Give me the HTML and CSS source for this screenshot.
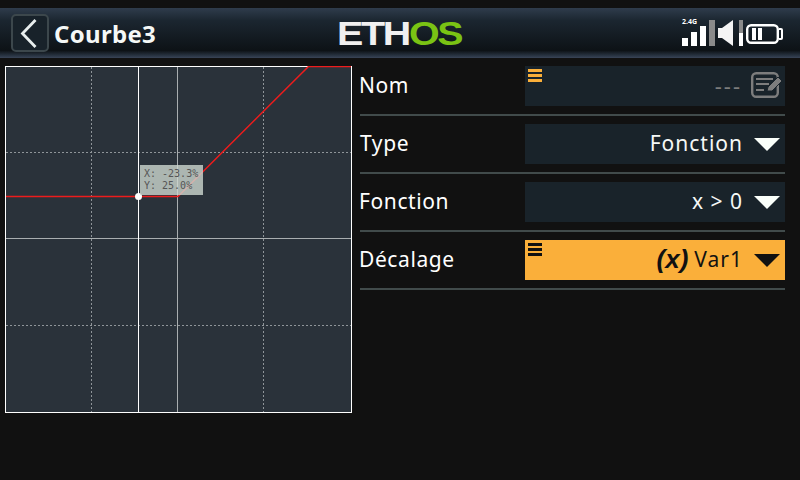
FILE: index.html
```html
<!DOCTYPE html>
<html lang="fr">
<head>
    <meta charset="UTF-8">
    <title>Courbe3</title>
    <link rel="stylesheet" href="styles.css">
</head>
<body>
    <div class="topbar">
        <div class="top-left">
            <button class="back">
                <svg width="24" height="30" viewBox="0 0 24 30"><path d="M17.5 2 L4.5 15.5 L17.5 29" fill="none" stroke="#e8eeee" stroke-width="2.8"/></svg>
            </button>
            <span class="title">Courbe3</span>
        </div>
        <div class="logo"><span class="logo-white">ETH</span><span class="logo-green">OS</span></div>
        <div class="status">
            <div class="signal">
                <span class="signal-label">2.4G</span>
                <svg width="34" height="26" viewBox="0 0 34 26">
                    <rect x="0" y="18" width="6" height="8" fill="#fff"/>
                    <rect x="9" y="12" width="6" height="14" fill="#fff"/>
                    <rect x="18" y="6" width="6" height="20" fill="#fff"/>
                    <rect x="27" y="0" width="6" height="26" fill="#8a8a8a"/>
                </svg>
            </div>
            <svg width="25" height="26" viewBox="0 0 25 26">
                <path d="M0 8 H4 L15 0 V26 L4 18 H0 Z" fill="#f4f4f4"/>
                <rect x="21" y="0" width="4" height="13" fill="#8a8a8a"/>
                <rect x="21" y="13" width="4" height="13" fill="#fff"/>
            </svg>
            <svg class="battery" width="37" height="20" viewBox="0 0 37 20">
                <rect x="1.2" y="1.2" width="30.6" height="17.6" rx="4" fill="none" stroke="#fff" stroke-width="2.4"/>
                <path d="M33 5 H35 Q36 5 36 6 V14 Q36 15 35 15 H33" fill="none" stroke="#fff" stroke-width="2"/>
                <rect x="6" y="4" width="4" height="12" fill="#fff"/>
                <rect x="12" y="4" width="4" height="12" fill="#fff"/>
            </svg>
        </div>
    </div>

    <div class="main">
        <div class="graph">
            <svg width="347" height="347" viewBox="0 0 347 347">
                <rect x="0.5" y="0.5" width="346" height="346" fill="none" stroke="#fff" stroke-width="1"/>
                <g stroke="#8f9599" stroke-width="1" stroke-dasharray="2 2">
                    <path d="M86.5 1 V346"/>
                    <path d="M258.5 1 V346"/>
                    <path d="M1 86.5 H346"/>
                    <path d="M1 259.5 H346"/>
                </g>
                <g stroke="#a9aeb0" stroke-width="1">
                    <path d="M172.5 1 V346"/>
                    <path d="M1 172.5 H346"/>
                </g>
                <path d="M133.5 1 V346" stroke="#fff" stroke-width="1"/>
                <path d="M1 130.5 H173 L303.5 0.5 H346" fill="none" stroke="#ee1c1c" stroke-width="1.5"/>
                <circle cx="133.5" cy="130.5" r="3.5" fill="#fff"/>
            </svg>
            <div class="tooltip">
                <div>X: -23.3%</div>
                <div>Y: 25.0%</div>
            </div>
        </div>

        <div class="form">
            <div class="row">
                <span class="label">Nom</span>
                <div class="field field-name">
                    <div class="grip"><i></i><i></i><i></i></div>
                    <span class="muted">---</span>
                    <svg width="32" height="26" viewBox="0 0 32 26">
                        <rect x="1.2" y="1.2" width="25.6" height="23.6" rx="4" fill="none" stroke="#7d7d7d" stroke-width="2.4"/>
                        <path d="M5 7 H22 M5 12 H18 M5 18 H13" stroke="#7d7d7d" stroke-width="2.2"/>
                        <path d="M16 19 L17 15 L27 5 L31 9 L21 19 Z" fill="#7d7d7d" stroke="#19232a" stroke-width="1"/>
                    </svg>
                </div>
            </div>
            <div class="row">
                <span class="label label-type">Type</span>
                <div class="field">
                    <span>Fonction</span>
                    <span class="arrow"></span>
                </div>
            </div>
            <div class="row">
                <span class="label">Fonction</span>
                <div class="field">
                    <span>x &gt; 0</span>
                    <span class="arrow"></span>
                </div>
            </div>
            <div class="row">
                <span class="label">Décalage</span>
                <div class="field field-active">
                    <div class="grip"><i></i><i></i><i></i></div>
                    <span class="var-icon">(x)</span>
                    <span>Var1</span>
                    <span class="arrow"></span>
                </div>
            </div>
        </div>
    </div>
</body>
</html>
```

FILE: styles.css
```css
body {
    margin: 0;
    width: 800px;
    height: 480px;
    overflow: hidden;
    background-color: #111111;
    color: #fff;
    font-family: 'Noto Sans', sans-serif;
}
.topbar {
    margin-top: 8px;
    height: 50px;
    box-sizing: border-box;
    display: flex;
    align-items: center;
    justify-content: space-between;
    padding: 0 16px 0 11px;
    background: linear-gradient(#2f3c4c 0%, #1b2630 25%, #0d1216 85%, #2b3645 96%, #3a4557 100%);
}
.top-left {
    display: flex;
    align-items: center;
    gap: 5px;
}
.back {
    width: 38px;
    height: 38px;
    box-sizing: border-box;
    padding: 0;
    display: flex;
    align-items: center;
    justify-content: center;
    background-color: #18222a;
    border: 2px solid #3c474c;
    border-radius: 5px;
}
.title {
    font-size: 24px;
    font-weight: 700;
    letter-spacing: 0.3px;
    color: #f5f8f6;
}
.logo {
    position: absolute;
    left: 337px;
    top: 12px;
    font-family: 'Liberation Sans', sans-serif;
    font-size: 34px;
    line-height: 42px;
    font-weight: 700;
    letter-spacing: -2px;
    transform: scaleX(1.16);
    transform-origin: left center;
}
.logo-white {
    color: #f0f0f0;
}
.logo-green {
    color: #7ac314;
}
.status {
    display: flex;
    align-items: flex-end;
    gap: 3px;
    height: 26px;
    margin-right: 1px;
}
.battery {
    margin-bottom: 2px;
}
.signal {
    position: relative;
    width: 33px;
    height: 26px;
}
.signal svg {
    display: block;
}
.signal-label {
    position: absolute;
    left: 0;
    top: -3px;
    font-size: 7px;
    line-height: 9px;
    font-weight: 700;
}
.main {
    display: flex;
    margin-top: 8px;
    padding-left: 5px;
}
.graph {
    position: relative;
    width: 347px;
    height: 347px;
    background-color: #2a323a;
}
.graph svg {
    display: block;
}
.tooltip {
    position: absolute;
    left: 135px;
    top: 99px;
    width: 63px;
    height: 30px;
    box-sizing: border-box;
    padding: 3px 0 0 4px;
    background-color: rgba(205, 215, 208, 0.8);
    color: #555;
    font-family: 'DejaVu Sans Mono', monospace;
    font-size: 10px;
    line-height: 12px;
}
.form {
    width: 425px;
    margin-left: 8px;
}
.row {
    height: 50px;
    box-sizing: border-box;
    margin-bottom: 8px;
    display: flex;
    justify-content: space-between;
    border-bottom: 2px solid #414b4b;
}
.label {
    height: 38px;
    margin-left: -1px;
    display: flex;
    align-items: center;
    font-size: 21px;
    letter-spacing: 0.6px;
}
.label-type {
    margin-left: 0;
}
.field {
    position: relative;
    width: 260px;
    height: 40px;
    box-sizing: border-box;
    display: flex;
    align-items: center;
    justify-content: flex-end;
    padding-right: 5px;
    padding-bottom: 2px;
    background-color: #19232a;
    font-size: 21px;
    letter-spacing: 1px;
    color: #f5f8f6;
}
.field-name {
    padding-right: 2px;
}
.muted {
    color: #7d7d7d;
    margin-right: 9px;
    font-size: 22px;
    letter-spacing: 2px;
}
.field-active {
    background-color: #faaf3a;
    color: #111;
}
.var-icon {
    font-family: 'Liberation Sans', sans-serif;
    font-style: italic;
    font-weight: 700;
    font-size: 26px;
    margin-right: 6px;
    letter-spacing: 0;
}
.arrow {
    width: 0;
    height: 0;
    margin-left: 11px;
    margin-top: 2px;
    border-left: 13px solid transparent;
    border-right: 13px solid transparent;
    border-top: 13px solid #fafffa;
}
.field-active .arrow {
    border-top-color: #111;
}
.grip {
    position: absolute;
    left: 3px;
    top: 3px;
    width: 14px;
}
.grip i {
    display: block;
    height: 3px;
    margin-bottom: 2px;
    background-color: #faaf3a;
}
.field-active .grip i {
    background-color: #111;
}
```
